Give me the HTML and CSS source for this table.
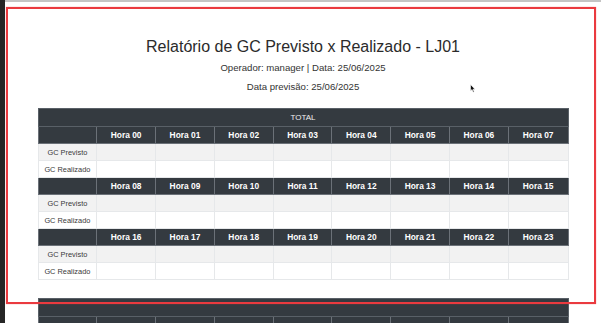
FILE: index.html
```html
<!DOCTYPE html>
<html lang="pt-BR">
<head>
<meta charset="utf-8">
<title>Relatório de GC Previsto x Realizado</title>
<link rel="stylesheet" href="styles.css">
</head>
<body>
<div class="window">
  <div class="side"></div>
  <main class="main">
    <h1 class="title">Relatório de GC Previsto x Realizado - LJ01</h1>
    <p class="sub">Operador: manager | Data: 25/06/2025</p>
    <p class="sub">Data previsão: 25/06/2025</p>

    <table class="report">
      <tr class="total"><th colspan="9">TOTAL</th></tr>
      <tr class="head"><th></th><th>Hora 00</th><th>Hora 01</th><th>Hora 02</th><th>Hora 03</th><th>Hora 04</th><th>Hora 05</th><th>Hora 06</th><th>Hora 07</th></tr>
      <tr class="odd"><td class="lbl">GC Previsto</td><td></td><td></td><td></td><td></td><td></td><td></td><td></td><td></td></tr>
      <tr class="even"><td class="lbl">GC Realizado</td><td></td><td></td><td></td><td></td><td></td><td></td><td></td><td></td></tr>
      <tr class="head"><th></th><th>Hora 08</th><th>Hora 09</th><th>Hora 10</th><th>Hora 11</th><th>Hora 12</th><th>Hora 13</th><th>Hora 14</th><th>Hora 15</th></tr>
      <tr class="odd"><td class="lbl">GC Previsto</td><td></td><td></td><td></td><td></td><td></td><td></td><td></td><td></td></tr>
      <tr class="even"><td class="lbl">GC Realizado</td><td></td><td></td><td></td><td></td><td></td><td></td><td></td><td></td></tr>
      <tr class="head"><th></th><th>Hora 16</th><th>Hora 17</th><th>Hora 18</th><th>Hora 19</th><th>Hora 20</th><th>Hora 21</th><th>Hora 22</th><th>Hora 23</th></tr>
      <tr class="odd"><td class="lbl">GC Previsto</td><td></td><td></td><td></td><td></td><td></td><td></td><td></td><td></td></tr>
      <tr class="even"><td class="lbl">GC Realizado</td><td></td><td></td><td></td><td></td><td></td><td></td><td></td><td></td></tr>
    </table>

    <table class="report next">
      <tr class="total"><th colspan="9">&nbsp;</th></tr>
      <tr class="head"><th></th><th></th><th></th><th></th><th></th><th></th><th></th><th></th><th></th></tr>
    </table>
  </main>
  <div class="frame"></div>
  <svg class="cursor" width="6" height="9" viewBox="0 0 6 9"><path d="M0.5 0.5 L0.5 7 L2 5.6 L3.2 8.3 L4.2 7.8 L3 5.2 L5 5.2 Z" fill="#111" stroke="#fff" stroke-width="0.6"/></svg>
</div>
</body>
</html>
```

FILE: styles.css
```css
html, body {
  margin: 0;
  padding: 0;
  background: #ffffff;
}
body {
  font-family: "Liberation Sans", Arial, sans-serif;
  color: #333333;
  overflow: hidden;
  height: 323px;
}
.window {
  position: relative;
  display: flex;
  height: 323px;
  overflow: hidden;
}
.side {
  width: 5px;
  flex: none;
  background: #262626;
}
.main {
  flex: 1;
  border-top: 2px solid #c4c4c4;
  display: flex;
  flex-direction: column;
  align-items: center;
}
.title {
  margin: 34px 0 0;
  font-size: 16px;
  line-height: 22px;
  font-weight: normal;
  color: #2b2b2b;
}
.sub {
  margin: 0;
  font-size: 9.6px;
  line-height: 19px;
  color: #333333;
}
.report {
  margin-top: 12px;
  width: 531px;
  border-collapse: collapse;
  table-layout: fixed;
  border: 1px solid #d5d7da;
}
.report th, .report td {
  width: 59px;
  padding: 0;
  text-align: center;
}
.total th {
  height: 17px;
  background: #343a40;
  color: #f0f0f0;
  font-size: 8px;
  font-weight: normal;
  border: 1px solid #596067;
}
.head th {
  height: 16px;
  background: #343a40;
  color: #ffffff;
  font-size: 8.4px;
  font-weight: bold;
  border: 1px solid #6b7178;
}
.report td {
  height: 16px;
  border: 1px solid #e6e8ea;
}
.odd td { background: #f2f2f2; }
.even td { background: #ffffff; }
.lbl {
  font-size: 7.4px;
  color: #3a3a3a;
}
.next {
  margin-top: 18px;
}
.frame {
  position: absolute;
  left: 6px;
  top: 7px;
  width: 586px;
  height: 293px;
  border: 2px solid #ea3a3f;
  box-shadow: 0 0 1px rgba(234, 58, 63, 0.6);
  pointer-events: none;
}
.cursor {
  position: absolute;
  left: 470px;
  top: 84px;
}
```
